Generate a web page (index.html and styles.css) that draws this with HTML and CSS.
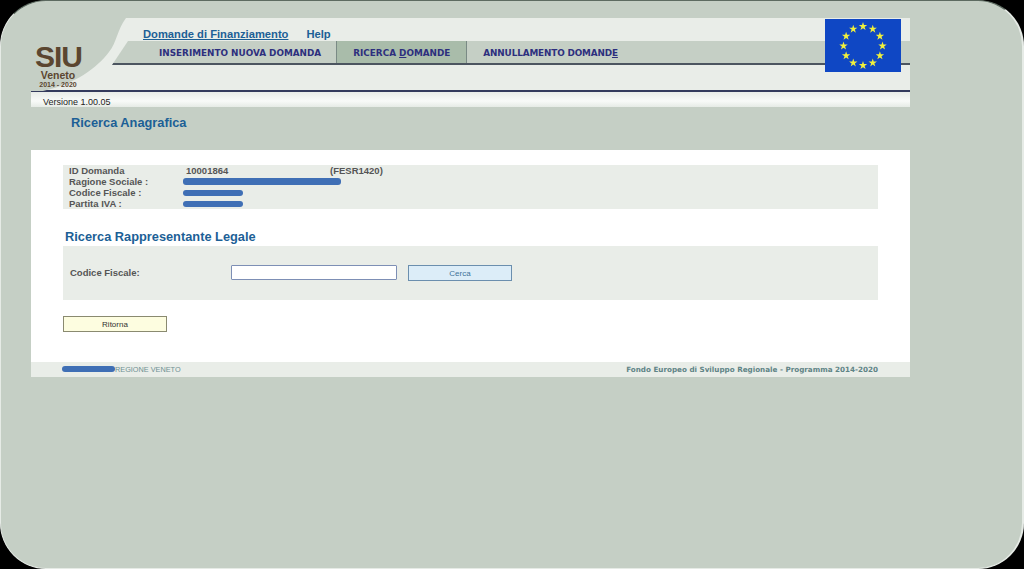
FILE: index.html
```html
<!DOCTYPE html>
<html lang="it">
<head>
  <meta charset="UTF-8" />
  <meta name="viewport" content="width=device-width, initial-scale=1" />
  <title>SIU Veneto - Ricerca Anagrafica</title>
  <link rel="stylesheet" href="styles.css">
</head>
<body>
<div class="frame">
  <div class="page">

    <!-- Header -->
    <div class="header">
      <svg class="header-curve" width="112" height="73" viewBox="0 0 112 73">
        <path d="M0 0H95C86 12 86 24 78 34C66 50 44 66 12 73H0Z" fill="#c5cfc5" />
      </svg>
      <div class="logo">
        <div class="logo-siu">SIU</div>
        <div class="logo-veneto">Veneto</div>
        <div class="logo-years">2014 - 2020</div>
      </div>
      <div class="header-links">
        <a class="link-main" href="#">Domande di Finanziamento</a>
        <a class="link-help" href="#">Help</a>
      </div>
      <div class="nav">
        <div class="nav-tab nav-first">INSERIMENTO NUOVA DOMANDA</div>
        <div class="nav-tab nav-active">RICERCA <u>D</u>OMANDE</div>
        <div class="nav-tab nav-last">ANNULLAMENTO DOMAND<u>E</u></div>
      </div>
      <svg class="flag" width="76" height="53" viewBox="0 0 76 53">
        <defs>
          <polygon id="s" points="0,-4.4 1,-1.4 4.2,-1.4 1.6,.5 2.6,3.6 0,1.7 -2.6,3.6 -1.6,.5 -4.2,-1.4 -1,-1.4" />
        </defs>
        <rect width="76" height="53" fill="#0f47c4" />
        <g fill="#f0f03c" transform="translate(38 27)">
          <use href="#s" x="0" y="-19.5" />
          <use href="#s" x="9.75" y="-16.9" />
          <use href="#s" x="16.9" y="-9.75" />
          <use href="#s" x="19.5" y="0" />
          <use href="#s" x="16.9" y="9.75" />
          <use href="#s" x="9.75" y="16.9" />
          <use href="#s" x="0" y="19.5" />
          <use href="#s" x="-9.75" y="16.9" />
          <use href="#s" x="-16.9" y="9.75" />
          <use href="#s" x="-19.5" y="0" />
          <use href="#s" x="-16.9" y="-9.75" />
          <use href="#s" x="-9.75" y="-16.9" />
        </g>
      </svg>
    </div>
    <div class="version">Versione 1.00.05</div>

    <h2 class="page-title">Ricerca Anagrafica</h2>

    <!-- Main content -->
    <div class="content">
      <div class="info-box">
        <div class="info-row"><span class="info-label">ID Domanda</span><span class="info-value">10001864</span><span>(FESR1420)</span></div>
        <div class="info-row"><span class="info-label">Ragione Sociale :</span><span class="blot blot-long"></span></div>
        <div class="info-row"><span class="info-label">Codice Fiscale :</span><span class="blot"></span></div>
        <div class="info-row"><span class="info-label">Partita IVA :</span><span class="blot"></span></div>
      </div>

      <h3 class="section-title">Ricerca Rappresentante Legale</h3>
      <div class="search-box">
        <label class="search-label" for="cf">Codice Fiscale:</label>
        <input class="search-input" id="cf" type="text" />
        <button class="btn-cerca">Cerca</button>
      </div>

      <button class="btn-ritorna">Ritorna</button>
    </div>

    <!-- Footer -->
    <div class="footer">
      <div class="footer-left"><span class="blot blot-footer"></span>REGIONE VENETO</div>
      <div class="footer-right">Fondo Europeo di Sviluppo Regionale - Programma 2014-2020</div>
    </div>

  </div>
</div>
</body>
</html>
```

FILE: styles.css
```css
* {
  margin: 0; padding: 0; box-sizing: border-box;
}
body {
  background: #000;
  font-family: "Liberation Sans", Arial, sans-serif;
  color: #4a4f4c;
}
.frame {
  width: 1024px;
  height: 569px;
  background: #c5cfc5;
  border-radius: 46px;
  border: 1px solid #e6ebe6;
  border-top-color: #5d6b61;
  border-right-width: 2px;
  padding: 17px 0 0 30px;
  overflow: hidden;
}
.page {
  width: 879px;
}
.header {
  position: relative;
  height: 74px;
  background: #e9ede8;
  border-bottom: 2px solid #333a5c;
  padding-left: 81px;
}
.header-curve {
  position: absolute;
  left: 0;
  top: 0;
}
.logo {
  position: absolute;
  left: 4px;
  top: 26px;
  width: 46px;
  color: #5b4630;
  text-align: center;
  font-weight: bold;
}
.logo-siu {
  font-size: 30px;
  line-height: 25px;
  letter-spacing: -1px;
}
.logo-veneto {
  font-size: 10.5px;
  line-height: 12px;
}
.logo-years {
  margin-left: -2px;
  margin-right: -2px;
  font-size: 7px;
  line-height: 7px;
  white-space: nowrap;
}
.header-links {
  position: relative;
  height: 23px;
  padding: 9px 0 0 31px;
  font-size: 11.2px;
  font-weight: bold;
  line-height: 14px;
  display: flex;
  gap: 18px;
}
.header-links a {
  color: #1c5f96;
  text-decoration: none;
}
.header-links .link-main {
  text-decoration: underline;
}
.nav {
  position: relative;
  display: flex;
  height: 24px;
  padding-left: 31px;
  background: #c5cfc5;
  border-bottom: 2px solid #4c5560;
  clip-path: polygon(16px 0, 100% 0, 100% 100%, 0 100%);
}
.nav-tab {
  padding: 0 16px;
  font-family: "DejaVu Sans", sans-serif;
  font-size: 8.85px;
  font-weight: bold;
  line-height: 24px;
  color: #2d2f7e;
  white-space: nowrap;
}
.nav-first {
  padding-right: 15px;
}
.nav-last {
  letter-spacing: -0.13px;
}
.nav-active {
  background: #a9bcaa;
  border-left: 1px solid #7a8a85;
  border-right: 1px solid #7a8a85;
}
.flag {
  position: absolute;
  right: 9px;
  top: 1px;
}
.version {
  height: 15px;
  padding-left: 12px;
  background: linear-gradient(#e8ece8, #f8faf8 60%, #e6ebe6);
  font-size: 9px;
  line-height: 21px;
  color: #222;
}
.page-title {
  height: 43px;
  padding: 8px 0 0 40px;
  font-size: 12.8px;
  line-height: 15px;
  color: #1c5f96;
}
.content {
  background: #fff;
  height: 212px;
  padding: 15px 32px 0 32px;
}
.info-box {
  height: 44px;
  background: #e9ede8;
  padding: 0 6px;
  font-size: 9.5px;
  font-weight: bold;
  color: #555;
}
.info-row {
  display: flex;
  align-items: center;
  height: 11px;
}
.info-label {
  width: 117px;
}
.info-value {
  width: 144px;
}
.blot {
  display: block;
  width: 60px;
  height: 6px;
  border-radius: 3px;
  background: #3f6fb5;
}
.info-row .blot {
  margin-left: -3px;
}
.blot-long {
  width: 158px;
  height: 7px;
}
.section-title {
  height: 37px;
  padding: 20px 0 0 2px;
  font-size: 12.8px;
  line-height: 15px;
  color: #1c5f96;
}
.search-box {
  display: flex;
  align-items: center;
  height: 54px;
  background: #e9ede8;
  padding: 0 0 2px 7px;
}
.search-label {
  width: 161px;
  font-size: 9.5px;
  font-weight: bold;
  color: #555;
}
.search-input {
  width: 166px;
  height: 15px;
  margin-top: 1px;
  border: 1px solid #7d8fb5;
  border-radius: 1px;
  background: #fff;
}
.btn-cerca {
  width: 104px;
  height: 16px;
  margin: 2px 0 0 11px;
  border: 1px solid #6b8fae;
  background: #dcedf8;
  color: #3f7398;
  font-family: "Liberation Sans", Arial, sans-serif;
  font-size: 8px;
}
.btn-ritorna {
  display: block;
  width: 104px;
  height: 16px;
  margin-top: 16px;
  border: 1px solid #8a8a70;
  background: #fdfde0;
  color: #333;
  font-family: "Liberation Sans", Arial, sans-serif;
  font-size: 8px;
}
.footer {
  display: flex;
  justify-content: space-between;
  align-items: center;
  height: 15px;
  padding: 0 32px 0 31px;
  background: #e9ede8;
  font-size: 7.3px;
  color: #6f9093;
}
.footer-left {
  display: flex;
  align-items: center;
}
.blot-footer {
  width: 53px;
  height: 6px;
  margin-bottom: 2px;
}
.footer-right {
  font-family: "DejaVu Sans", sans-serif;
  font-size: 7.2px;
  font-weight: bold;
  color: #5f8486;
}
```
